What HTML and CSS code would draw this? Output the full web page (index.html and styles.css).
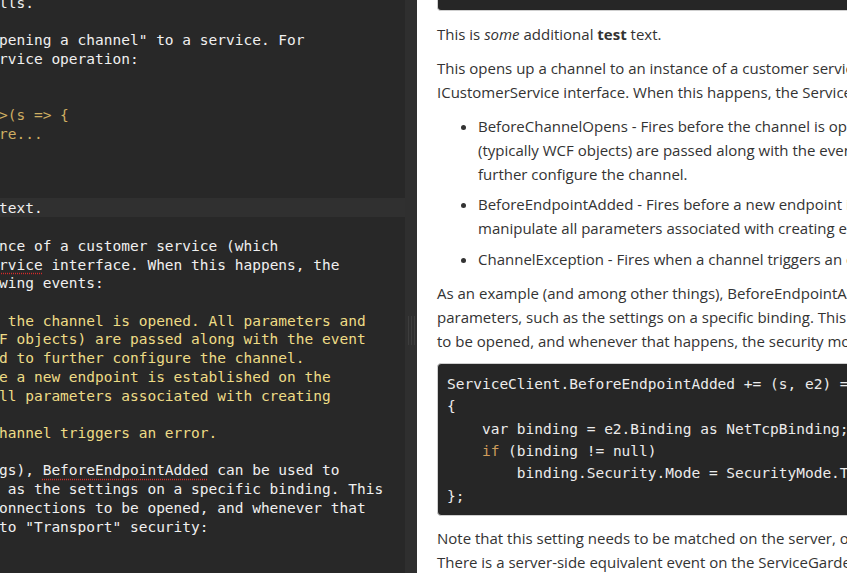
FILE: index.html
```html
<!DOCTYPE html>
<html>
<head>
<meta charset="utf-8">
<link rel="stylesheet" href="styles.css">
</head>
<body>
<div class="app">
  <div class="editor">
    <div class="lines">
      <div class="ln">lls.</div>
      <div class="ln"> </div>
      <div class="ln">pening a channel" to a service. For</div>
      <div class="ln">rvice operation:</div>
      <div class="ln"> </div>
      <div class="ln"> </div>
      <div class="ln code">&gt;(s =&gt; {</div>
      <div class="ln code">re...</div>
      <div class="ln"> </div>
      <div class="ln"> </div>
      <div class="ln"> </div>
      <div class="ln current">text.</div>
      <div class="ln"> </div>
      <div class="ln">nce of a customer service (which</div>
      <div class="ln"><span class="spell">rvice</span> interface. When this happens, the</div>
      <div class="ln">wing events:</div>
      <div class="ln"> </div>
      <div class="ln list"> the channel is opened. All parameters and</div>
      <div class="ln list">F objects) are passed along with the event</div>
      <div class="ln list">d to further configure the channel.</div>
      <div class="ln list">e a new endpoint is established on the</div>
      <div class="ln list">ll parameters associated with creating</div>
      <div class="ln"> </div>
      <div class="ln list">hannel triggers an error.</div>
      <div class="ln"> </div>
      <div class="ln">gs), <span class="spell">BeforeEndpointAdded</span> can be used to</div>
      <div class="ln"> as the settings on a specific binding. This</div>
      <div class="ln">onnections to be opened, and whenever that</div>
      <div class="ln">to "Transport" security:</div>
      <div class="ln"> </div>
      <div class="ln"> </div>
    </div>
  </div>
  <div class="scrollbar"><div class="grip"></div></div>
  <div class="preview">
    <div class="code-tail"></div>
    <p>This is <em>some</em> additional <strong>test</strong> text.</p>
    <p>This opens up a channel to an instance of a customer service (which implements the<br>ICustomerService interface. When this happens, the ServiceClient fires the following events:</p>
    <ul>
      <li>BeforeChannelOpens - Fires before the channel is opened. All parameters and objects<br>(typically WCF objects) are passed along with the event args and can be used to<br>further configure the channel.</li>
      <li>BeforeEndpointAdded - Fires before a new endpoint is established on the channel and can<br>manipulate all parameters associated with creating endpoints.</li>
      <li>ChannelException - Fires when a channel triggers an error.</li>
    </ul>
    <p>As an example (and among other things), BeforeEndpointAdded can be used to change<br>parameters, such as the settings on a specific binding. This allows for secure connections<br>to be opened, and whenever that happens, the security mode is set to "Transport" security:</p>
    <pre class="codeblock"><span>ServiceClient.BeforeEndpointAdded += (s, e2) =&gt;</span>
<span>{</span>
<span>    var binding = e2.Binding as NetTcpBinding;</span>
<span>    <span class="kw">if</span> (binding != null)</span>
<span>        binding.Security.Mode = SecurityMode.Transport;</span>
<span>};</span></pre>
    <p>Note that this setting needs to be matched on the server, of course.<br>There is a server-side equivalent event on the ServiceGarden class.</p>
  </div>
</div>
</body>
</html>
```

FILE: styles.css
```css
html, body {
  margin: 0;
  padding: 0;
  width: 847px;
  height: 573px;
  overflow: hidden;
  background: #ffffff;
}

.app {
  display: flex;
  width: 847px;
  height: 573px;
  overflow: hidden;
}

.editor {
  width: 405px;
  flex: none;
  background: #282828;
  overflow: hidden;
  font-family: "DejaVu Sans Mono", "Liberation Mono", monospace;
  font-size: 14.5px;
  color: #f0f0f0;
}

.lines {
  margin-top: -8px;
  margin-left: -1px;
}

.ln {
  box-sizing: border-box;
  height: 18.73px;
  line-height: 18.73px;
  padding-top: 1.5px;
  white-space: pre;
}

.ln.current {
  background: #303030;
}

.ln.code {
  color: #cfae62;
}

.ln.list {
  color: #eedc86;
}

.spell {
  text-decoration: underline dotted #d42a2a;
  text-underline-offset: 3px;
}

.scrollbar {
  width: 12px;
  flex: none;
  background: #2f2f2f;
  padding-top: 316px;
  box-sizing: border-box;
}

.grip {
  margin-left: 3px;
  width: 7px;
  height: 29px;
  background: repeating-linear-gradient(to right, #3d3d3d 0 1px, transparent 1px 3px);
}

.preview {
  flex: 1;
  min-width: 0;
  overflow: hidden;
  padding-left: 20px;
  font-family: "Open Sans", "Noto Sans", sans-serif;
  font-size: 15px;
  line-height: 24px;
  color: #333333;
  white-space: nowrap;
}

.preview p {
  margin: 10px 0;
}

.preview strong {
  font-weight: 700;
}

.preview ul {
  margin: 10px 0;
  padding-left: 41px;
}

.preview li + li {
  margin-top: 6.4px;
}

.code-tail {
  height: 10px;
  margin-bottom: 11px;
  background: #262626;
  border: 1px solid #cfcfcf;
  border-top: none;
  border-radius: 0 0 4px 4px;
  width: 900px;
}

.codeblock {
  margin: 10px 0;
  width: 900px;
  padding: 9px 10px 8px 9px;
  background: #262626;
  border: 1px solid #cfcfcf;
  border-radius: 4px;
  font-family: "DejaVu Sans Mono", "Liberation Mono", monospace;
  font-size: 14.5px;
  line-height: 22.4px;
  color: #ececec;
  white-space: pre;
}

.codeblock .kw {
  color: #cf9d5c;
}
```
